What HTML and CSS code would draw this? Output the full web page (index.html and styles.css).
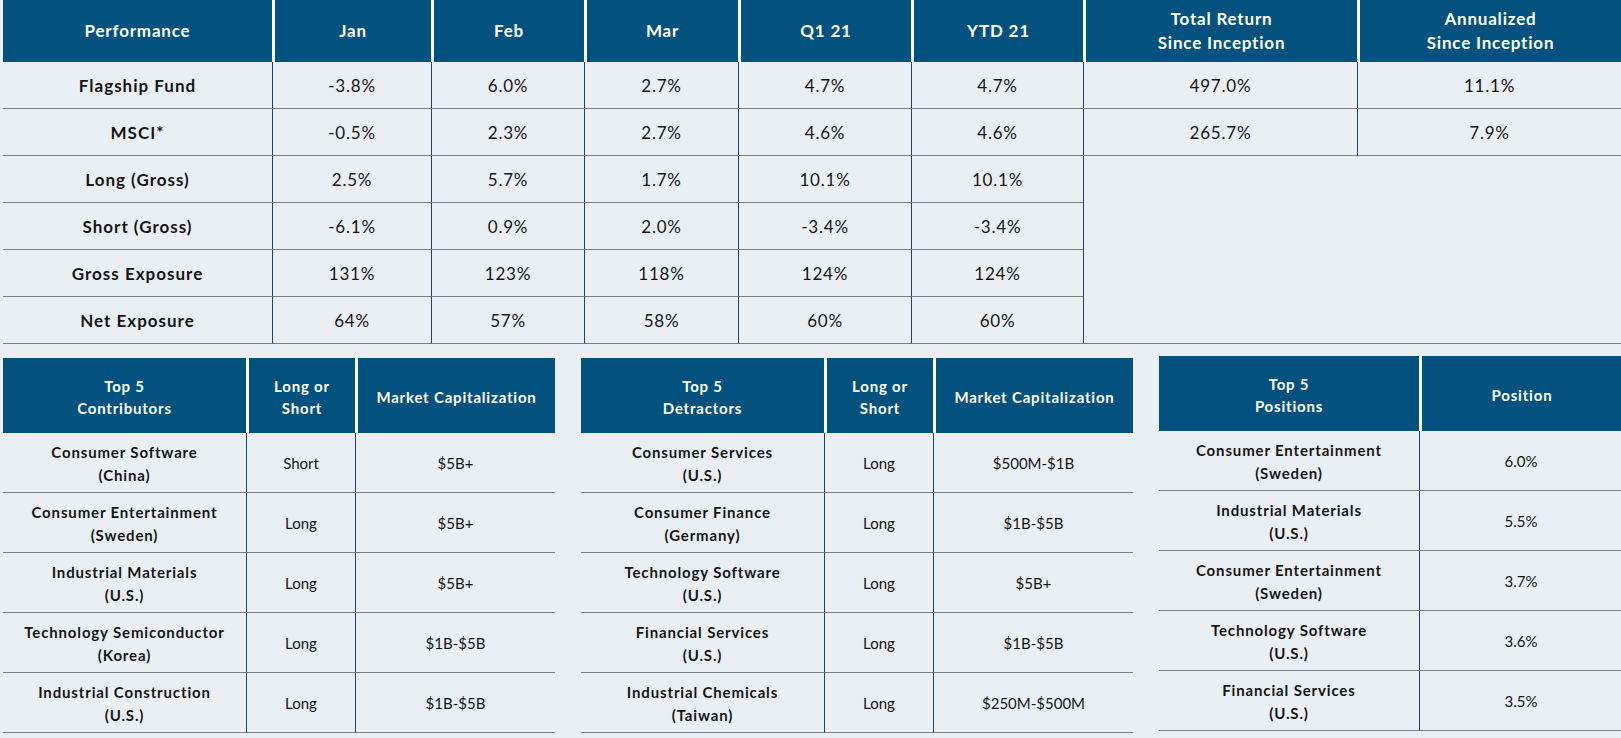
FILE: index.html
```html
<!DOCTYPE html>
<html>
<head>
<meta charset="utf-8">
<title>Performance</title>
<link rel="stylesheet" href="styles.css">
</head>
<body>
<div class="page">
  <div class="perf">
    <div class="th">Performance</div>
    <div class="th">Jan</div>
    <div class="th">Feb</div>
    <div class="th">Mar</div>
    <div class="th">Q1 21</div>
    <div class="th">YTD 21</div>
    <div class="th">Total Return<br>Since Inception</div>
    <div class="th">Annualized<br>Since Inception</div>

    <div class="td lbl first">Flagship Fund</div>
    <div class="td">-3.8%</div>
    <div class="td">6.0%</div>
    <div class="td">2.7%</div>
    <div class="td">4.7%</div>
    <div class="td">4.7%</div>
    <div class="td">497.0%</div>
    <div class="td">11.1%</div>

    <div class="td lbl first">MSCI*</div>
    <div class="td">-0.5%</div>
    <div class="td">2.3%</div>
    <div class="td">2.7%</div>
    <div class="td">4.6%</div>
    <div class="td">4.6%</div>
    <div class="td">265.7%</div>
    <div class="td">7.9%</div>

    <div class="td lbl first">Long (Gross)</div>
    <div class="td">2.5%</div>
    <div class="td">5.7%</div>
    <div class="td">1.7%</div>
    <div class="td">10.1%</div>
    <div class="td">10.1%</div>
    <div class="td blank"></div>

    <div class="td lbl first">Short (Gross)</div>
    <div class="td">-6.1%</div>
    <div class="td">0.9%</div>
    <div class="td">2.0%</div>
    <div class="td">-3.4%</div>
    <div class="td">-3.4%</div>

    <div class="td lbl first">Gross Exposure</div>
    <div class="td">131%</div>
    <div class="td">123%</div>
    <div class="td">118%</div>
    <div class="td">124%</div>
    <div class="td">124%</div>

    <div class="td lbl first">Net Exposure</div>
    <div class="td">64%</div>
    <div class="td">57%</div>
    <div class="td">58%</div>
    <div class="td">60%</div>
    <div class="td">60%</div>
  </div>

  <div class="lower">
    <div class="t5 three">
      <div class="th">Top 5<br>Contributors</div>
      <div class="th">Long or<br>Short</div>
      <div class="th">Market Capitalization</div>

      <div class="td lbl first">Consumer Software<br>(China)</div>
      <div class="td">Short</div>
      <div class="td">$5B+</div>

      <div class="td lbl first">Consumer Entertainment<br>(Sweden)</div>
      <div class="td">Long</div>
      <div class="td">$5B+</div>

      <div class="td lbl first">Industrial Materials<br>(U.S.)</div>
      <div class="td">Long</div>
      <div class="td">$5B+</div>

      <div class="td lbl first">Technology Semiconductor<br>(Korea)</div>
      <div class="td">Long</div>
      <div class="td">$1B-$5B</div>

      <div class="td lbl first">Industrial Construction<br>(U.S.)</div>
      <div class="td">Long</div>
      <div class="td">$1B-$5B</div>
    </div>

    <div class="t5 three">
      <div class="th">Top 5<br>Detractors</div>
      <div class="th">Long or<br>Short</div>
      <div class="th">Market Capitalization</div>

      <div class="td lbl first">Consumer Services<br>(U.S.)</div>
      <div class="td">Long</div>
      <div class="td">$500M-$1B</div>

      <div class="td lbl first">Consumer Finance<br>(Germany)</div>
      <div class="td">Long</div>
      <div class="td">$1B-$5B</div>

      <div class="td lbl first">Technology Software<br>(U.S.)</div>
      <div class="td">Long</div>
      <div class="td">$5B+</div>

      <div class="td lbl first">Financial Services<br>(U.S.)</div>
      <div class="td">Long</div>
      <div class="td">$1B-$5B</div>

      <div class="td lbl first">Industrial Chemicals<br>(Taiwan)</div>
      <div class="td">Long</div>
      <div class="td">$250M-$500M</div>
    </div>

    <div class="t5 two">
      <div class="th">Top 5<br>Positions</div>
      <div class="th">Position</div>

      <div class="td lbl first">Consumer Entertainment<br>(Sweden)</div>
      <div class="td">6.0%</div>

      <div class="td lbl first">Industrial Materials<br>(U.S.)</div>
      <div class="td">5.5%</div>

      <div class="td lbl first">Consumer Entertainment<br>(Sweden)</div>
      <div class="td">3.7%</div>

      <div class="td lbl first">Technology Software<br>(U.S.)</div>
      <div class="td">3.6%</div>

      <div class="td lbl first">Financial Services<br>(U.S.)</div>
      <div class="td">3.5%</div>
    </div>
  </div>
</div>
</body>
</html>
```

FILE: styles.css
```css
html, body {
  margin: 0;
  padding: 0;
}

body {
  background: #eaeff4;
  color: #151515;
  font-family: Lato, "Noto Sans", "DejaVu Sans", sans-serif;
  font-size: 15px;
}

.page {
  padding-left: 3px;
  width: 1618px;
}

.perf {
  display: grid;
  grid-template-columns: 269px 159px 153px 154px 173px 172px 274px 264px;
  grid-template-rows: 62px repeat(6, 47px);
  font-size: 17px;
  letter-spacing: 0.8px;
}

.th {
  background: #02517f;
  color: #ffffff;
  font-weight: 700;
  line-height: 24px;
  display: flex;
  align-items: center;
  justify-content: center;
  text-align: center;
  border-left: 3px solid #ffffff;
}

.th:first-child {
  border-left: 0;
}

.td {
  display: flex;
  align-items: center;
  justify-content: center;
  text-align: center;
  border-bottom: 1px solid #7c8288;
  border-left: 1px solid #1d4466;
  line-height: 22px;
  padding-top: 1px;
}

.td.first {
  border-left: 0;
}

.lbl {
  font-weight: 700;
}

.perf .lbl {
  letter-spacing: 1px;
}

.blank {
  grid-column: 7 / 9;
  grid-row: 4 / 8;
}

.lower {
  display: flex;
  gap: 26px;
  margin-top: 14px;
  align-items: flex-start;
}

.t5 {
  display: grid;
  grid-template-rows: 75px repeat(5, 60px);
  font-size: 15px;
}

.t5 .th {
  line-height: 22px;
  letter-spacing: 0.8px;
  padding-top: 3px;
}

.t5 .td {
  line-height: 23px;
  padding-top: 2px;
}

.t5 .lbl {
  letter-spacing: 0.85px;
}

.three {
  grid-template-columns: 243px 109px 200px;
}

.two {
  grid-template-columns: 260px 203px;
  margin-top: -2px;
}
```
